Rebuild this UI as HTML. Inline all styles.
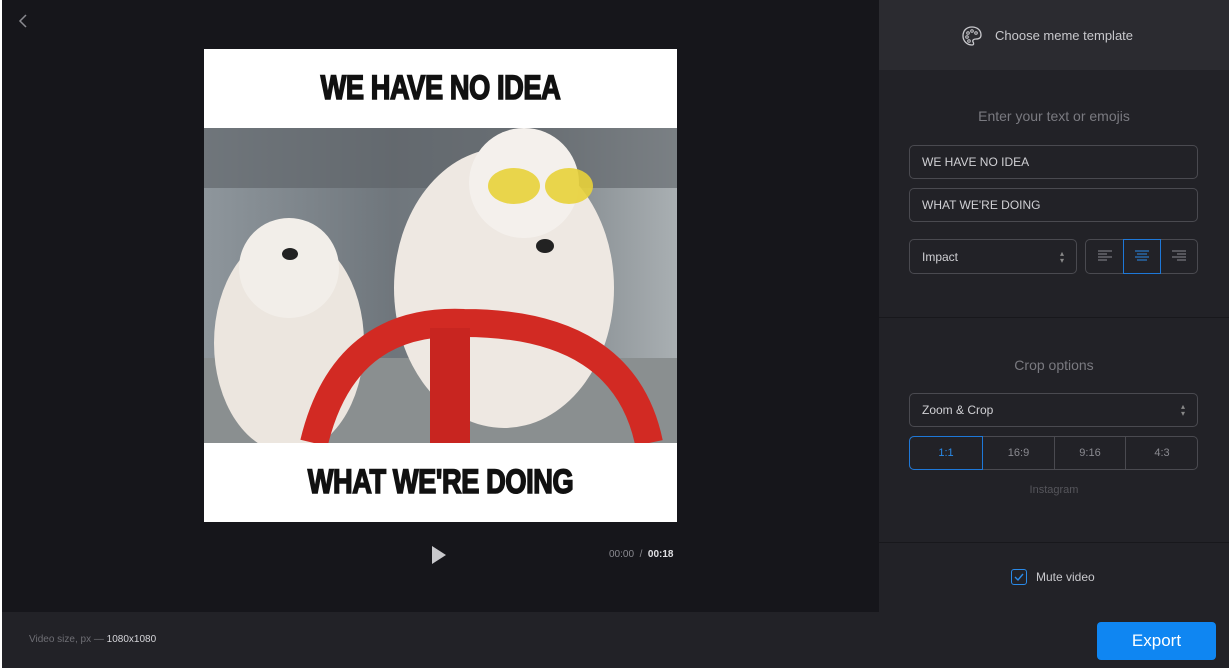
<!DOCTYPE html>
<html><head><meta charset="utf-8"><style>
*{box-sizing:border-box;margin:0;padding:0}
body{width:1231px;height:671px;background:#fff;font-family:"Liberation Sans",sans-serif;position:relative;overflow:hidden}
.abs{position:absolute}
.left{left:2px;top:0;width:877px;height:612px;background:#16161b}
.bottom{left:2px;top:612px;width:1227px;height:56px;background:#222227}
.right{left:879px;top:0;width:350px;height:612px;background:#222227}
.hdr{left:879px;top:0;width:350px;height:70px;background:#2b2b30}
.inp{position:absolute;border:1px solid #4a4a50;border-radius:5px;color:#d0d0d4;font-size:12px;padding-left:12px;display:flex;align-items:center}
.lbl{position:absolute;width:350px;text-align:center;color:#7a7a80;font-size:14px}
.sep{position:absolute;left:879px;width:350px;height:1px;background:#18181c}
.impact{font-family:Impact,"Liberation Sans Narrow","Liberation Sans",sans-serif;font-weight:bold;color:#111;font-size:34px;position:absolute;width:473px;text-align:center;transform:scaleX(0.8);letter-spacing:-0.5px;-webkit-text-stroke:1.6px #111}
</style></head><body>
<div class="abs left"></div>
<div class="abs right"></div>
<div class="abs hdr"></div>
<div class="abs bottom"></div>
<svg class="abs" style="left:16px;top:13px" width="14" height="16"><path d="M10 2 L4 8 L10 14" stroke="#8a8a90" stroke-width="1.5" fill="none"/></svg>
<div class="abs" style="left:204px;top:49px;width:473px;height:473px;background:#fff"></div>
<div class="impact" style="left:204px;top:69px">WE HAVE NO IDEA</div>
<div class="impact" style="left:204px;top:463px">WHAT WE'RE DOING</div>
<svg class="abs" style="left:204px;top:128px" width="473" height="315">
<defs><linearGradient id="h" x1="0" x2="1"><stop offset="0" stop-color="#8e969c"/><stop offset="0.4" stop-color="#6f767c"/><stop offset="0.7" stop-color="#7c8388"/><stop offset="1" stop-color="#a9afb2"/></linearGradient></defs>
<rect width="473" height="315" fill="url(#h)"/>
<rect x="0" y="0" width="473" height="60" fill="#5c6166" opacity="0.6"/>
<rect x="0" y="230" width="473" height="85" fill="#8a8f90"/>
<ellipse cx="85" cy="215" rx="75" ry="110" fill="#ece6df"/>
<ellipse cx="85" cy="140" rx="50" ry="50" fill="#f2eee9"/>
<ellipse cx="300" cy="160" rx="110" ry="140" fill="#eee8e2"/>
<ellipse cx="320" cy="55" rx="55" ry="55" fill="#f4f0ec"/>
<ellipse cx="310" cy="58" rx="26" ry="18" fill="#e8d23a" opacity="0.9"/>
<ellipse cx="365" cy="58" rx="24" ry="18" fill="#e8d23a" opacity="0.9"/>
<ellipse cx="341" cy="118" rx="9" ry="7" fill="#222"/>
<ellipse cx="86" cy="126" rx="8" ry="6" fill="#222"/>
<path d="M110 315 Q140 190 260 195 Q420 195 445 315" stroke="#d22a23" stroke-width="28" fill="none"/>
<rect x="226" y="200" width="40" height="115" fill="#c82520"/>
</svg>
<svg class="abs" style="left:431px;top:545px" width="16" height="20"><path d="M1 1 L15 10 L1 19Z" fill="#c8c8cc"/></svg>
<div class="abs" style="left:609px;top:549px;font-size:10px;color:#8a8a90">00:00 &nbsp;/&nbsp; <b style="color:#e0e0e4">00:18</b></div>
<div class="abs" style="left:29px;top:634px;font-size:10px;color:#6e6e74">Video size, px — <span style="color:#d6d6da">1080x1080</span></div>
<svg class="abs" style="left:961px;top:25px" width="22" height="22" viewBox="0 0 22 22"><path d="M11 2 C5 2 2 6 2 11 C2 16 6 20 11 20 C13 20 13 18 12 17 C11 15 13 14 15 14 C19 14 20 12 20 10 C20 5 16 2 11 2Z" fill="none" stroke="#c8c8cc" stroke-width="1.3"/><circle cx="7" cy="8" r="1.3" fill="none" stroke="#c8c8cc"/><circle cx="11" cy="6" r="1.3" fill="none" stroke="#c8c8cc"/><circle cx="15" cy="8" r="1.3" fill="none" stroke="#c8c8cc"/><circle cx="6" cy="12" r="1.3" fill="none" stroke="#c8c8cc"/><circle cx="8" cy="16" r="1.3" fill="none" stroke="#c8c8cc"/></svg>
<div class="abs" style="left:995px;top:28px;font-size:13px;color:#c8c8cc">Choose meme template</div>
<div class="lbl" style="left:879px;top:108px">Enter your text or emojis</div>
<div class="inp" style="left:909px;top:145px;width:289px;height:34px">WE HAVE NO IDEA</div>
<div class="inp" style="left:909px;top:188px;width:289px;height:34px">WHAT WE'RE DOING</div>
<div class="inp" style="left:909px;top:239px;width:168px;height:35px">Impact<span style="position:absolute;right:12px;font-size:8px;color:#888;line-height:7px">▴<br>▾</span></div>
<div class="inp" style="left:1085px;top:239px;width:113px;height:35px;padding:0"></div>
<div class="abs" style="left:1123px;top:239px;width:38px;height:35px;border:1px solid #1e78d8"></div>
<svg class="abs" style="left:1097px;top:250px" width="16" height="12"><path d="M1 1H15M1 4H10M1 7H15M1 10H10" stroke="#8a8a90"/></svg>
<svg class="abs" style="left:1134px;top:250px" width="16" height="12"><path d="M1 1H15M3 4H13M1 7H15M3 10H13" stroke="#2a8ae8"/></svg>
<svg class="abs" style="left:1171px;top:250px" width="16" height="12"><path d="M1 1H15M6 4H15M1 7H15M6 10H15" stroke="#8a8a90"/></svg>
<div class="sep" style="top:317px"></div>
<div class="lbl" style="left:879px;top:357px">Crop options</div>
<div class="inp" style="left:909px;top:393px;width:289px;height:34px">Zoom &amp; Crop<span style="position:absolute;right:12px;font-size:8px;color:#888;line-height:7px">▴<br>▾</span></div>
<div class="inp" style="left:909px;top:436px;width:289px;height:34px;padding:0"></div>
<div class="abs" style="left:909px;top:436px;width:74px;height:34px;border:1px solid #1e78d8;border-radius:5px 0 0 5px;color:#2a8ae8;font-size:11px;text-align:center;line-height:32px">1:1</div>
<div class="abs" style="left:983px;top:437px;width:72px;height:32px;border-right:1px solid #4a4a50;color:#8a8a90;font-size:11px;text-align:center;line-height:32px">16:9</div>
<div class="abs" style="left:1055px;top:437px;width:71px;height:32px;border-right:1px solid #4a4a50;color:#8a8a90;font-size:11px;text-align:center;line-height:32px">9:16</div>
<div class="abs" style="left:1126px;top:437px;width:72px;height:32px;color:#8a8a90;font-size:11px;text-align:center;line-height:32px">4:3</div>
<div class="lbl" style="left:879px;top:484px;font-size:11px;color:#55555b">Instagram</div>
<div class="sep" style="top:542px"></div>
<div class="abs" style="left:1011px;top:569px;width:16px;height:16px;border:1px solid #2a8ae8;border-radius:3px"></div>
<svg class="abs" style="left:1014px;top:572px" width="10" height="10"><path d="M1 5 L4 8 L9 2" stroke="#2a8ae8" stroke-width="1.4" fill="none"/></svg>
<div class="abs" style="left:1036px;top:570px;font-size:12px;color:#c8c8cc">Mute video</div>
<div class="abs" style="left:1097px;top:622px;width:119px;height:38px;background:#0f86f2;border-radius:4px;color:#fff;font-size:17px;text-align:center;line-height:38px">Export</div>
</body></html>
